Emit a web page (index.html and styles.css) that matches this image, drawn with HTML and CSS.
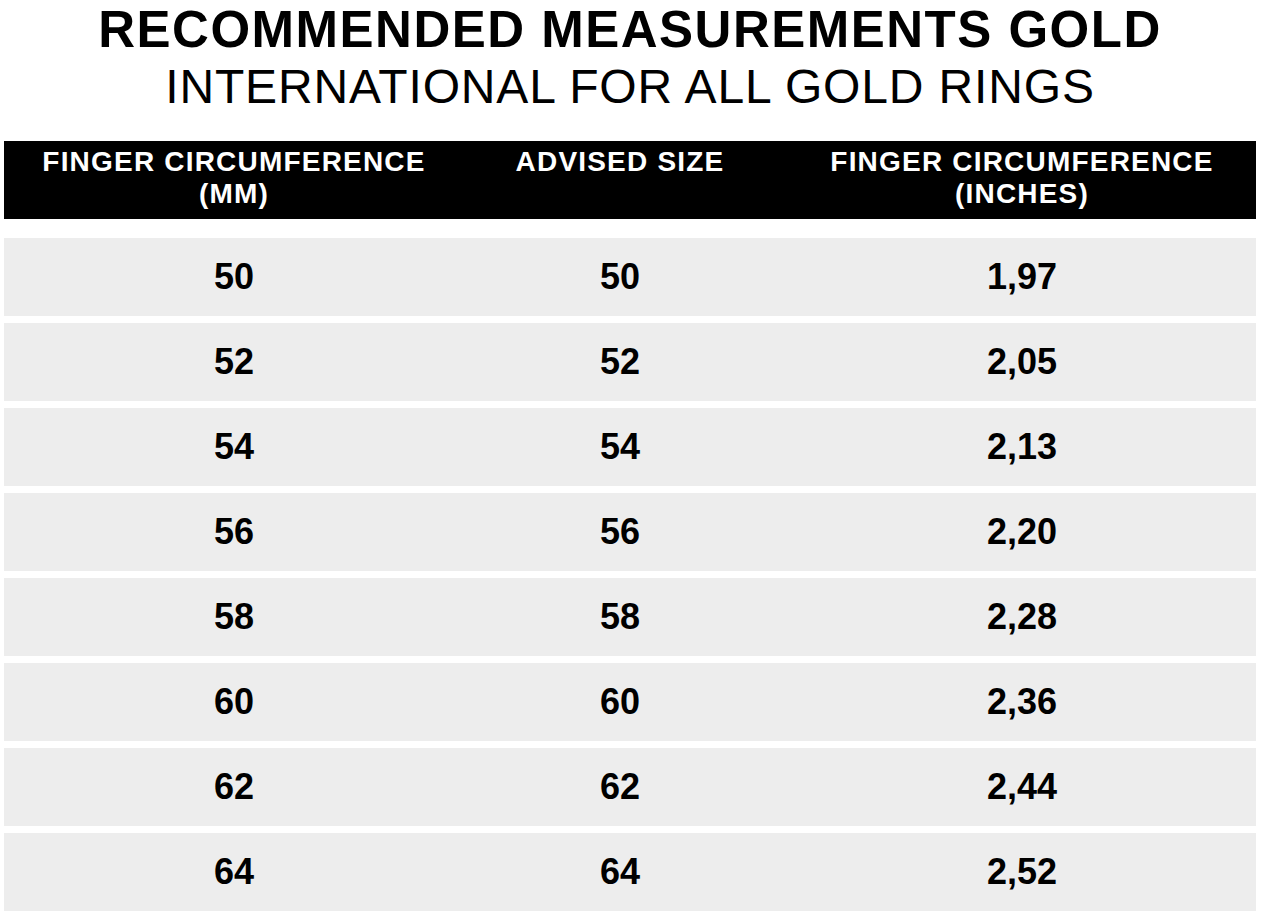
FILE: index.html
```html
<!DOCTYPE html>
<html lang="en">
<head>
<meta charset="utf-8">
<title>Recommended Measurements Gold</title>
<link rel="stylesheet" href="styles.css">
</head>
<body>
<main class="page">
  <header class="titles">
    <h1 class="title">RECOMMENDED MEASUREMENTS GOLD</h1>
    <p class="subtitle">INTERNATIONAL FOR ALL GOLD RINGS</p>
  </header>
  <section class="size-table">
    <div class="row head">
      <div class="cell">FINGER CIRCUMFERENCE<br>(MM)</div>
      <div class="cell">ADVISED SIZE</div>
      <div class="cell c3">FINGER CIRCUMFERENCE<br>(INCHES)</div>
    </div>
    <div class="body">
      <div class="row"><div class="cell">50</div><div class="cell">50</div><div class="cell c3">1,97</div></div>
      <div class="row"><div class="cell">52</div><div class="cell">52</div><div class="cell c3">2,05</div></div>
      <div class="row"><div class="cell">54</div><div class="cell">54</div><div class="cell c3">2,13</div></div>
      <div class="row"><div class="cell">56</div><div class="cell">56</div><div class="cell c3">2,20</div></div>
      <div class="row"><div class="cell">58</div><div class="cell">58</div><div class="cell c3">2,28</div></div>
      <div class="row"><div class="cell">60</div><div class="cell">60</div><div class="cell c3">2,36</div></div>
      <div class="row"><div class="cell">62</div><div class="cell">62</div><div class="cell c3">2,44</div></div>
      <div class="row"><div class="cell">64</div><div class="cell">64</div><div class="cell c3">2,52</div></div>
    </div>
  </section>
</main>
</body>
</html>
```

FILE: styles.css
```css
html, body {
  margin: 0;
  padding: 0;
  background: #ffffff;
}

body {
  font-family: "Liberation Sans", Arial, sans-serif;
  color: #000000;
}

.page {
  width: 1252px;
  margin-left: 4px;
}

.titles {
  text-align: center;
  padding-top: 1px;
}

.title {
  margin: 0;
  font-size: 51px;
  line-height: 57px;
  font-weight: 700;
  letter-spacing: 1.5px;
}

.subtitle {
  margin: 0;
  font-size: 48px;
  line-height: 57px;
  font-weight: 400;
  letter-spacing: 0.85px;
}

.size-table {
  margin-top: 26px;
}

.row {
  display: grid;
  grid-template-columns: 460px 312px 1fr;
  height: 78px;
  background: #ededed;
}

.row.head {
  background: #000000;
  color: #ffffff;
  font-size: 28px;
  line-height: 32px;
  font-weight: 700;
  letter-spacing: 1.2px;
  text-align: center;
  align-items: start;
}

.row.head .cell {
  padding-top: 5px;
}

.body {
  margin-top: 19px;
  display: flex;
  flex-direction: column;
  gap: 7px;
}

.body .row {
  align-items: center;
  text-align: center;
  font-size: 36px;
  font-weight: 700;
  line-height: 40px;
}

.cell.c3 {
  padding-left: 12px;
}
```
